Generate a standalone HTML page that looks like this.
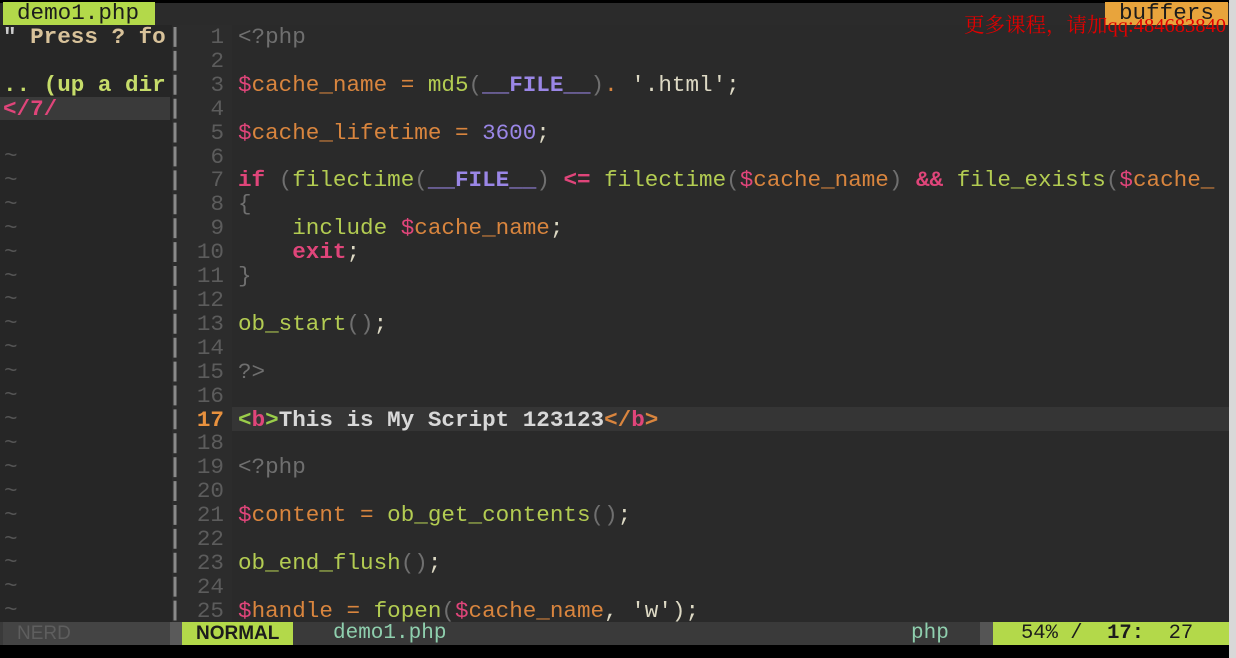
<!DOCTYPE html>
<html><head><meta charset="utf-8"><style>
*{margin:0;padding:0;box-sizing:border-box}
body{width:1236px;height:658px;background:#000;position:relative;overflow:hidden;font-family:"Liberation Mono",monospace;font-size:22.6px}
.a{position:absolute;white-space:pre;line-height:24px}
.g{color:#6f6f6f}.v{color:#e0457a}.o{color:#d9853e}.f{color:#b3cc52}.p{color:#9a86e6;font-weight:bold}.k{color:#e0457a;font-weight:bold}.s{color:#ddd9c4}.w{color:#d8d8d8;font-weight:bold}.gr{color:#9acd4a}
</style></head><body>
<div style="position:absolute;left:0;top:3px;width:1229px;height:22px;background:#2b2b2b"></div>
<div class="a" style="left:3px;top:2px;width:152px;height:23px;background:#b3d94a;color:#1c1c1c;padding-left:14px;line-height:23px">demo1.php</div>
<div class="a" style="left:1105px;top:2px;width:123px;height:23px;background:#e8a43c;color:#1c1c1c;padding-left:14px;line-height:23px">buffers</div>
<div style="position:absolute;left:0;top:25px;width:172px;height:597px;background:#262626"></div>
<div style="position:absolute;left:172px;top:25px;width:60px;height:597px;background:#2c2c2c"></div>
<div style="position:absolute;left:232px;top:25px;width:997px;height:597px;background:#2a2a2a"></div>
<div style="position:absolute;left:1229px;top:0;width:7px;height:658px;background:#d8d8d8"></div>
<div style="position:absolute;left:0;top:97px;width:170px;height:23px;background:#3a3a3a"></div>
<div style="position:absolute;left:232px;top:407px;width:997px;height:24px;background:#353535"></div>
<div class="a" style="left:3px;top:25px;font-weight:bold"><span style="color:#ccc">"</span><span style="color:#d8c29a"> Press ? fo</span></div>
<div class="a" style="left:3px;top:73px;font-weight:bold;color:#c6dc6a">.. (up a dir</div>
<div class="a" style="left:3px;top:97px;font-weight:bold;color:#e0457a">&lt;/7/</div>
<div class="a" style="left:180px;top:26px;color:#5c5c5c;text-align:right;width:44px;line-height:23.9px">1
2
3
4
5
6
7
8
9
10
11
12
13
14
15
16
<span style="color:#e8913e;font-weight:bold">17</span>
18
19
20
21
22
23
24
25</div>
<div class="a" style="left:238px;top:26px;line-height:23.9px"><span class="g">&lt;?php</span>

<span class="v">$</span><span class="o">cache_name = </span><span class="f">md5</span><span class="g">(</span><span class="p">__FILE__</span><span class="g">)</span><span class="o">. </span><span class="s">'.html'</span><span class="s">;</span>

<span class="v">$</span><span class="o">cache_lifetime = </span><span class="p" style="font-weight:normal">3600</span><span class="s">;</span>

<span class="k">if</span> <span class="g">(</span><span class="f">filectime</span><span class="g">(</span><span class="p">__FILE__</span><span class="g">)</span> <span class="k">&lt;=</span> <span class="f">filectime</span><span class="g">(</span><span class="v">$</span><span class="o">cache_name</span><span class="g">)</span> <span class="k">&amp;&amp;</span> <span class="f">file_exists</span><span class="g">(</span><span class="v">$</span><span class="o">cache_</span>
<span class="g">{</span>
    <span class="f">include</span> <span class="v">$</span><span class="o">cache_name</span><span class="s">;</span>
    <span class="k">exit</span><span class="s">;</span>
<span class="g">}</span>

<span class="f">ob_start</span><span class="g">()</span><span class="s">;</span>

<span class="g">?&gt;</span>

<span class="gr" style="font-weight:bold">&lt;</span><span class="k">b</span><span class="gr" style="font-weight:bold">&gt;</span><span class="w">This is My Script 123123</span><span class="o" style="font-weight:bold">&lt;/</span><span class="k">b</span><span class="o" style="font-weight:bold">&gt;</span>

<span class="g">&lt;?php</span>

<span class="v">$</span><span class="o">content = </span><span class="f">ob_get_contents</span><span class="g">()</span><span class="s">;</span>

<span class="f">ob_end_flush</span><span class="g">()</span><span class="s">;</span>

<span class="v">$</span><span class="o">handle = </span><span class="f">fopen</span><span class="g">(</span><span class="v">$</span><span class="o">cache_name</span><span class="s">, 'w')</span><span class="s">;</span></div>
<div class="a" style="left:4px;top:145px;color:#555;line-height:23.9px">~
~
~
~
~
~
~
~
~
~
~
~
~
~
~
~
~
~
~
~</div>
<svg style="position:absolute;left:172px;top:25px" width="6" height="597"><line x1="3" y1="2" x2="3" y2="597" stroke="#8a8a8a" stroke-width="3" stroke-dasharray="19.9 4"/></svg>
<div style="position:absolute;left:0;top:622px;width:1229px;height:23px;background:#3a3a3a"></div>
<div class="a" style="left:3px;top:622px;width:167px;height:23px;background:#444;color:#5e5e5e;padding-left:14px;line-height:23px;font-family:'Liberation Sans',sans-serif;font-size:19px">NERD</div>
<div style="position:absolute;left:170px;top:622px;width:12px;height:23px;background:#5a5a5a"></div>
<div class="a" style="left:182px;top:622px;width:111px;height:23px;background:#b3d94a;color:#1c1c1c;font-weight:bold;padding-left:14px;line-height:23px;font-family:'Liberation Sans',sans-serif;font-size:19px">NORMAL</div>
<div class="a" style="left:333px;top:622px;line-height:23px;color:#8fcfae;font-size:21px">demo1.php</div>
<div class="a" style="left:911px;top:622px;line-height:23px;color:#8fcfae;font-size:21px">php</div>
<div style="position:absolute;left:980px;top:622px;width:13px;height:23px;background:#555"></div>
<div class="a" style="left:993px;top:622px;width:236px;height:23px;background:#b3d94a;color:#1c1c1c;line-height:23px;padding-left:28px;font-size:20.5px">54% /  <b>17:</b>  27</div>
<div class="a" style="left:964px;top:14px;color:#e00000;font-family:'Liberation Serif','Noto Serif CJK SC',serif;font-size:20.5px;line-height:24px">更多课程，请加qq:484683840</div>
</body></html>
